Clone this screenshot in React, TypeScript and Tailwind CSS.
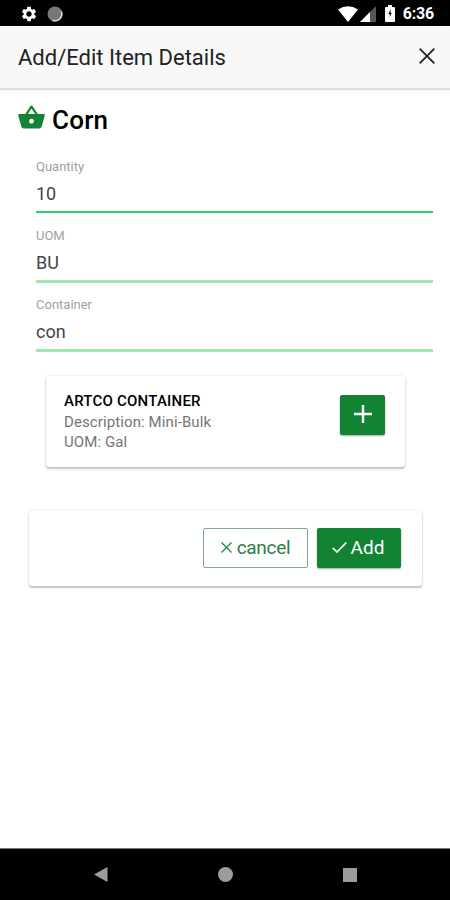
import { MdSettings, MdShoppingBasket } from "react-icons/md";

interface Field {
  label: string;
  value: string;
  active?: boolean;
}

const fields: Field[] = [
  { label: "Quantity", value: "10", active: true },
  { label: "UOM", value: "BU" },
  { label: "Container", value: "con" },
];

export default function App() {
  return (
    <div className="flex h-[900px] w-[450px] flex-col overflow-hidden bg-white font-[Roboto,sans-serif] text-black">
      <StatusBar />

      <header className="flex h-[63px] shrink-0 items-center justify-between border-b-2 border-[#dedede] bg-[#f8f8f8] pr-[15px] pl-[18px] shadow-[0_1px_2px_rgba(0,0,0,0.06)]">
        <h1 className="text-[22px] leading-[26px] text-[#222]">Add/Edit Item Details</h1>
        <button aria-label="Close" className="-mt-1">
          <Cross className="size-4 text-[#222]" width={1.8} />
        </button>
      </header>

      <main className="flex-1">
        <div className="flex h-[60px] items-center gap-[6px] pl-[17px]">
          <MdShoppingBasket className="-mt-[6px] size-[29px] text-[#128233]" />
          <h2 className="text-[26px] font-medium tracking-[0.2px]">Corn</h2>
        </div>

        <div className="mr-[17px] ml-[36px]">
          {fields.map(f => <FieldRow key={f.label} {...f} />)}
        </div>

        <div className="mt-6 mr-[45px] ml-[46px] flex h-[91px] justify-between rounded-[3px] pt-[15px] pr-5 pl-[18px] shadow-[0_2px_2px_rgba(0,0,0,0.22),0_0_3px_rgba(0,0,0,0.13)]">
          <div className="text-[15px] leading-5 tracking-[0.1px] text-[#757575]">
            <p className="mb-px font-medium tracking-[0.22px] text-black">ARTCO CONTAINER</p>
            <p>Description: Mini-Bulk</p>
            <p>UOM: Gal</p>
          </div>
          <button aria-label="Add container" className="mt-1 flex h-10 w-[45px] items-center justify-center rounded-[2px] bg-[#128233] pb-[3px] text-white shadow-[0_1px_2px_rgba(0,0,0,0.35)]">
            <svg viewBox="0 0 18 18" className="size-[18px]" stroke="currentColor" strokeWidth="2.4">
              <path d="M9 0v18M0 9h18" />
            </svg>
          </button>
        </div>

        <div className="mt-11 mr-7 ml-[29px] flex h-[75px] justify-end gap-[9px] rounded-[3px] pt-[17px] pr-[21px] shadow-[0_2px_2px_rgba(0,0,0,0.22),0_0_3px_rgba(0,0,0,0.13)]">
          <button className="flex h-10 w-[105px] items-center justify-center gap-[5px] rounded-[2px] border border-[#7fab8b] text-[19px] tracking-[-0.3px] text-[#2d8047]">
            <Cross className="mb-px size-[11px]" width={1.8} />
            cancel
          </button>
          <button className="flex h-10 w-[84px] items-center justify-center gap-1 rounded-[2px] bg-[#128233] pr-[2px] text-[19px] text-white shadow-[0_1px_2px_rgba(0,0,0,0.35)]">
            <svg viewBox="0 0 15 11" className="mb-[2px] h-[11px] w-[15px]" fill="none" stroke="currentColor" strokeWidth="1.7">
              <path d="M.7 5.8 5 10 14.3.7" />
            </svg>
            Add
          </button>
        </div>
      </main>

      <NavBar />
    </div>
  );
}

function FieldRow({ label, value, active }: Field) {
  return (
    <div className={`flex flex-col ${active ? "mb-px h-[63px] border-b-2 border-[#20d760] pt-[9px]" : "h-[69px] border-b-3 border-[#a0e8ae] pt-[14px]"}`}>
      <label className="text-[13px] leading-4 text-[#a0a0a0]">{label}</label>
      <span className="mt-[7px] text-[18px] leading-6 text-[#444]">{value}</span>
    </div>
  );
}

function Cross({ className, width }: { className: string; width: number }) {
  return (
    <svg viewBox="0 0 16 16" className={className} stroke="currentColor" strokeWidth={width}>
      <path d="M.7.7l14.6 14.6M15.3.7.7 15.3" />
    </svg>
  );
}

function StatusBar() {
  return (
    <div className="mb-px flex h-[26px] shrink-0 items-center justify-between bg-black pt-px pr-4 pl-5 text-white">
      <div className="flex items-center gap-[9px]">
        <MdSettings className="size-[18px]" />
        <svg viewBox="0 0 16 16" className="size-4">
          <circle cx="8" cy="8" r="7.5" fill="#777" />
          <path d="M14.2 5.2A6.8 6.8 0 0 1 5.5 14.3" fill="none" stroke="#ddd" strokeWidth="1.5" />
        </svg>
      </div>
      <div className="flex items-center">
        <svg viewBox="0 0 20 16" className="h-4 w-5" fill="currentColor">
          <path d="M0 3.5Q10-3 20 3.5L10 16Z" />
        </svg>
        <svg viewBox="0 0 16 16" className="ml-[2px] size-4">
          <path d="M16 0v16H0Z" fill="#555" />
          <path d="M10 6v10H0Z" fill="#fff" />
        </svg>
        <svg viewBox="0 0 10 17" className="ml-[9px] h-[17px] w-[10px]">
          <path d="M3 0h4v2h2q1 0 1 1v13q0 1-1 1H1q-1 0-1-1V3q0-1 1-1h2Z" fill="#fff" />
          <path d="M5.6 4.5 3.3 9h1.5v3L6.8 8H5.6Z" fill="#000" />
        </svg>
        <span className="mt-px ml-2 text-[16px] leading-5 font-bold tracking-[-0.2px]">6:36</span>
      </div>
    </div>
  );
}

function NavBar() {
  return (
    <nav className="flex h-[52px] shrink-0 items-center justify-between border-t border-[#777] bg-black pr-[93px] pl-[94px] text-[#9c9c9c]">
      <svg viewBox="0 0 14 15" className="h-[15px] w-[14px]" fill="currentColor">
        <path d="M0 7.5 13.5 0v15Z" />
      </svg>
      <div className="size-[15px] rounded-full bg-[#9c9c9c]" />
      <div className="size-[14px] bg-[#9c9c9c]" />
    </nav>
  );
}
